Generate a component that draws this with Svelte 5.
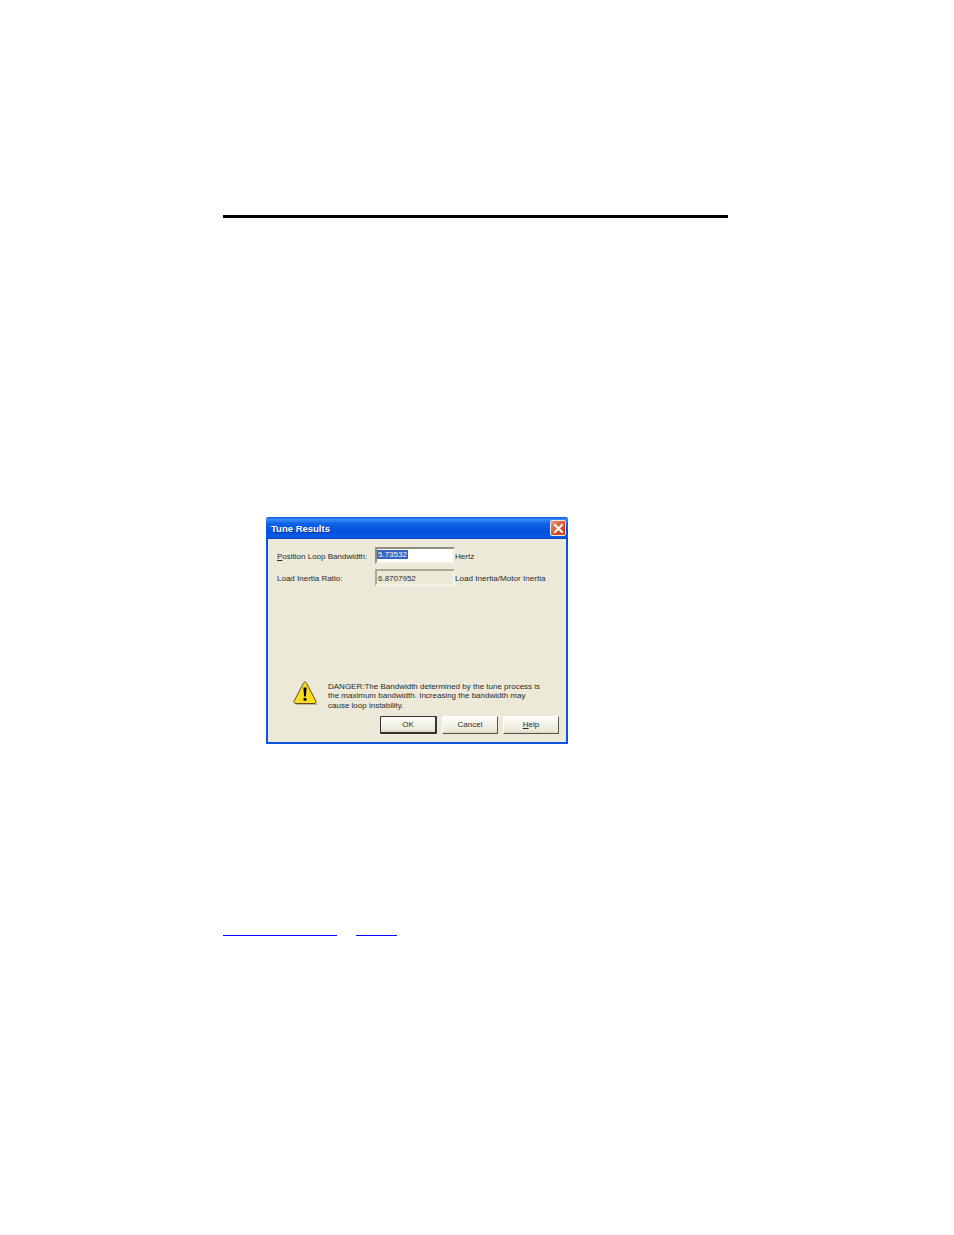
<script>
  let bandwidth = "5.73532";
  const ratio = "6.8707952";
</script>

<div class="page">
  <div class="rule"></div>

  <div class="dialog">
    <div class="titlebar">
      <span class="title">Tune Results</span>
      <button class="close" aria-label="Close">
        <svg width="11" height="11" viewBox="0 0 11 11">
          <path d="M2 2 L9 9 M9 2 L2 9" stroke="#fff" stroke-width="2" stroke-linecap="square" />
        </svg>
      </button>
    </div>

    <div class="body">
      <div class="row first">
        <span class="label"><u>P</u>osition Loop Bandwidth:</span>
        <div class="field white"><span class="selected">{bandwidth}</span></div>
        <span class="unit">Hertz</span>
      </div>
      <div class="row second">
        <span class="label">Load Inertia Ratio:</span>
        <div class="field"><span>{ratio}</span></div>
        <span class="unit">Load Inertia/Motor Inertia</span>
      </div>

      <div class="warning">
        <svg class="icon" width="25" height="25" viewBox="0 0 25 25">
          <path d="M13 3 L24.5 24 L3 24 Z" fill="#8a8a80" opacity="0.55" />
          <path d="M12 1 C11 1 10.6 2 10 3 L1.4 19.5 C0.6 21 1 22.5 3 22.5 L21 22.5 C23 22.5 23.4 21 22.6 19.5 L14 3 C13.4 2 13 1 12 1 Z" fill="#fbdc1e" stroke="#4a3e14" stroke-width="0.9" />
          <path d="M10.4 6.5 H13.6 L12.9 15.5 H11.1 Z" fill="#000" />
          <rect x="10.6" y="17" width="2.8" height="2.8" rx="0.6" fill="#000" />
        </svg>
        <p>DANGER:The Bandwidth determined by the tune process is<br />the maximum bandwidth. Increasing the bandwidth may<br />cause loop instability.</p>
      </div>

      <div class="buttons">
        <button class="default">OK</button>
        <button>Cancel</button>
        <button><u>H</u>elp</button>
      </div>
    </div>
  </div>

  <div class="links">
    <span class="link one"></span>
    <span class="link two"></span>
  </div>
</div>

<style>
  :global(body) {
    margin: 0;
    background: #fff;
  }
  .page {
    width: 505px;
    padding: 215px 0 0 223px;
    font-family: "Liberation Sans", Arial, sans-serif;
  }
  .rule {
    height: 3px;
    background: #000;
  }
  .dialog {
    width: 302px;
    height: 227px;
    box-sizing: border-box;
    margin: 299px 0 0 43px;
    display: flex;
    flex-direction: column;
    background: #ece9d8;
    border: 2px solid #0a54e0;
    border-top: none;
    border-radius: 3px 3px 0 0;
  }
  .titlebar {
    height: 22px;
    margin: 0 -2px;
    padding: 0 2px 0 5px;
    display: flex;
    align-items: center;
    justify-content: space-between;
    flex-shrink: 0;
    border-radius: 3px 3px 0 0;
    background: linear-gradient(#0a5ce4 0%, #3a8cf6 12%, #0f62e6 30%, #0450dc 70%, #0a5ce8 90%, #0442b8 100%);
  }
  .title {
    color: #fff;
    font-size: 9.5px;
    font-weight: bold;
    text-shadow: 1px 1px 0 #0a2f90;
  }
  .close {
    width: 16px;
    height: 16px;
    padding: 0;
    display: flex;
    align-items: center;
    justify-content: center;
    background: linear-gradient(135deg, #ea9a80, #dc5530 50%, #c53a18);
    border: 1px solid #f4e8e0;
    border-radius: 2px;
  }
  .body {
    flex: 1;
    display: flex;
    flex-direction: column;
    padding: 0 7px 8px 9px;
    color: #2a2a2a;
    font-size: 8px;
  }
  .row {
    display: flex;
    align-items: center;
  }
  .row.first {
    margin-top: 8px;
  }
  .row.second {
    margin-top: 5px;
  }
  .label {
    width: 98px;
    flex-shrink: 0;
    position: relative;
    top: 1px;
  }
  .field {
    width: 80px;
    height: 17px;
    box-sizing: border-box;
    flex-shrink: 0;
    padding: 2px 1px 0;
    line-height: 11px;
    border: 2px solid;
    border-color: #aca899 #f6f4ea #f6f4ea #aca899;
  }
  .field.white {
    padding-top: 1px;
    line-height: 9px;
    background: #fff;
    border-color: #8f8d80 #f1efe2 #f1efe2 #8f8d80;
  }
  .selected {
    background: #3565c0;
    color: #fff;
    padding: 0 1px;
    margin-left: -1px;
  }
  .unit {
    font-size: 8.1px;
    position: relative;
    top: 1px;
  }
  .warning {
    margin-top: auto;
    display: flex;
    align-items: flex-start;
    padding-left: 16px;
  }
  .icon {
    width: 25px;
    height: 25px;
    flex-shrink: 0;
    margin-top: -1px;
  }
  .warning p {
    width: 230px;
    margin: 0 0 0 10px;
    line-height: 9.3px;
    white-space: nowrap;
  }
  .buttons {
    display: flex;
    justify-content: flex-end;
    gap: 5px;
    margin-top: 6px;
  }
  .buttons button {
    width: 56px;
    height: 18px;
    padding: 0 0 1px;
    font-family: inherit;
    font-size: 8px;
    color: #2a2a2a;
    background: linear-gradient(#fdfdfa, #ece9d8 85%, #d8d4c0);
    border: 1px solid;
    border-color: #fff #55554a #55554a #fff;
    border-radius: 1px;
  }
  .buttons button.default {
    width: 57px;
    padding: 0;
    border-color: #333;
    border-width: 1px 2px 2px 1px;
  }
  .links {
    display: flex;
    gap: 19px;
    margin-top: 191px;
  }
  .link {
    height: 1px;
    background: #00f;
  }
  .link.one {
    width: 114px;
  }
  .link.two {
    width: 41px;
  }
</style>
